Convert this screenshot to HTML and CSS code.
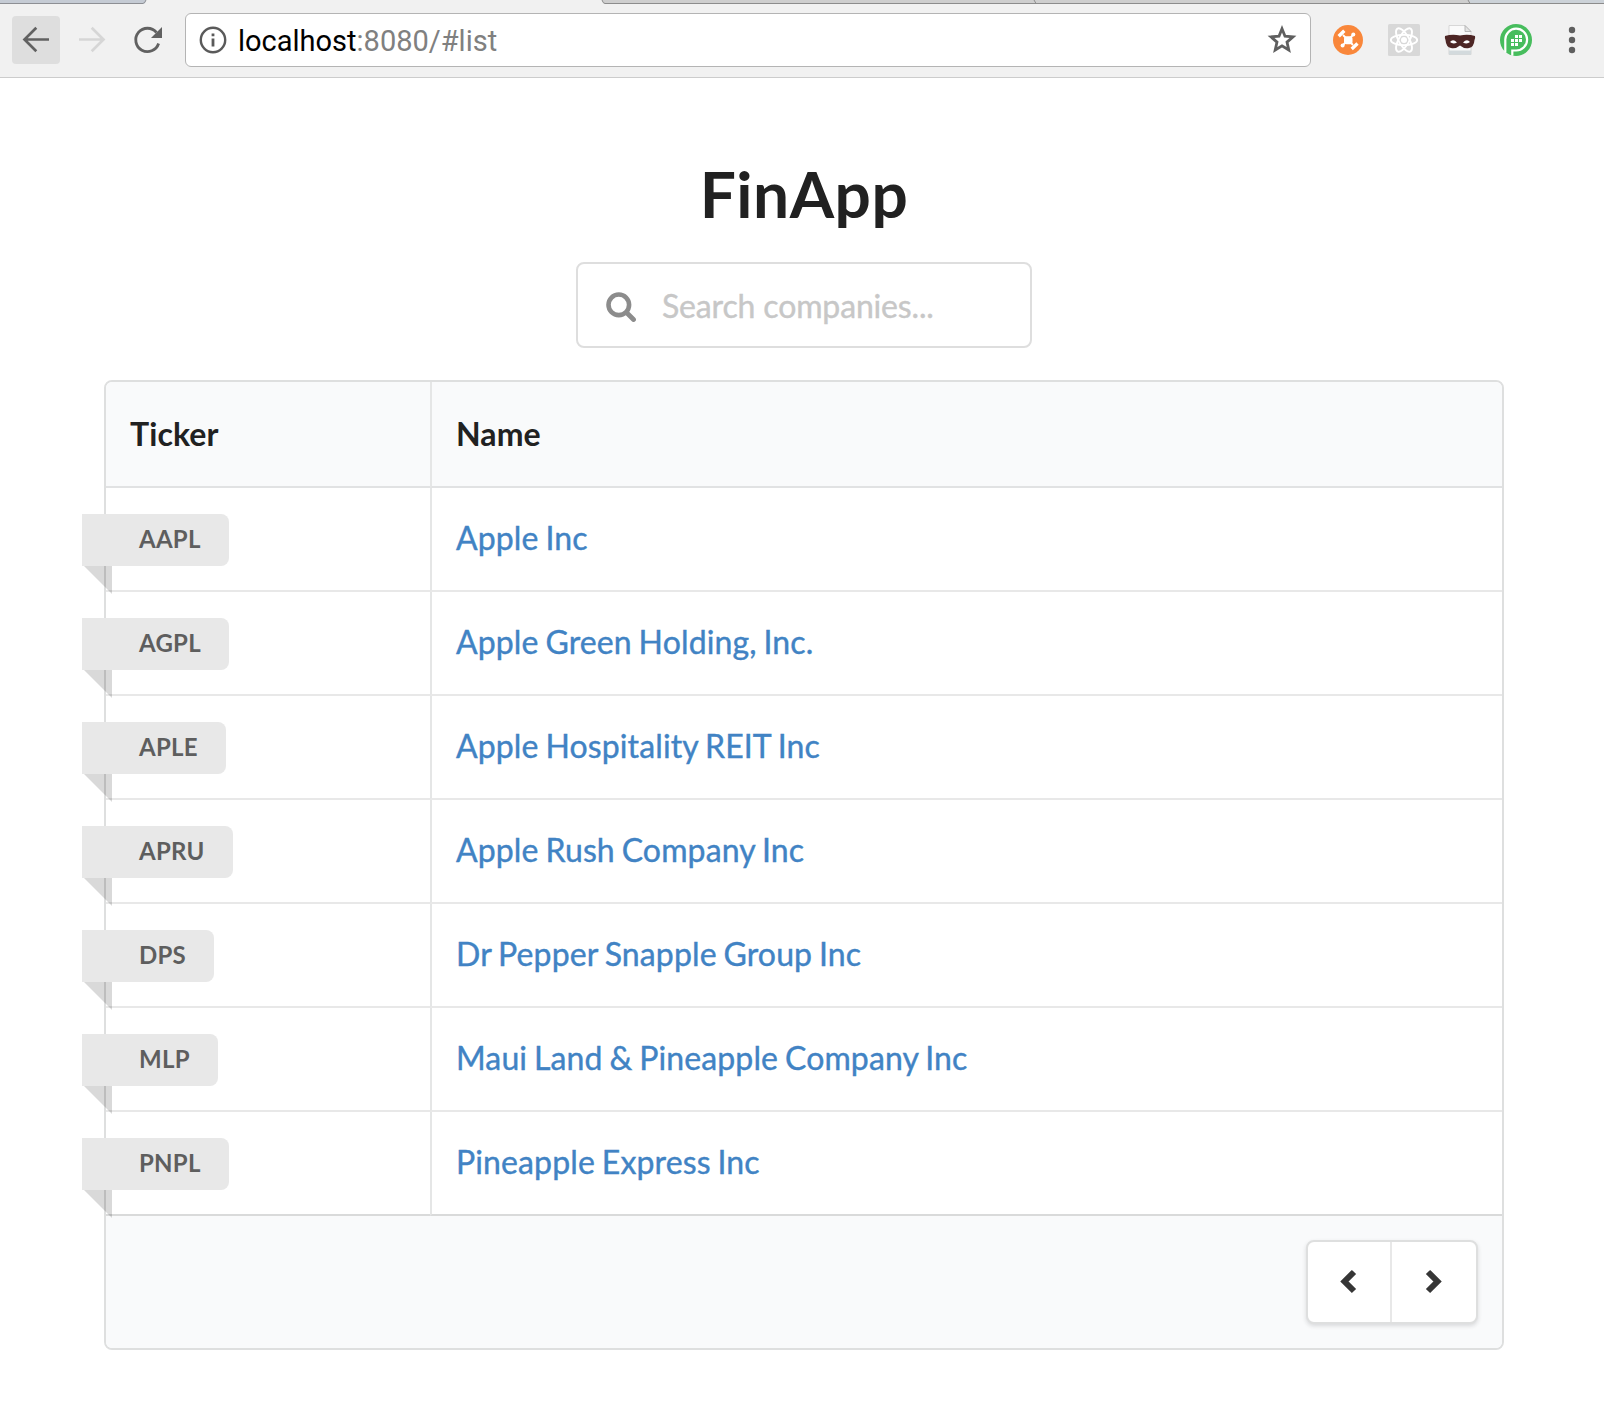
FILE: index.html
```html
<!DOCTYPE html>
<html lang="en">
<head>
<meta charset="utf-8">
<title>FinApp</title>
<link rel="stylesheet" href="styles.css">
</head>
<body>
<header class="browser">
  <svg class="tabs" viewBox="0 0 1604 4" width="1604" height="4" aria-hidden="true">
    <path d="M0 0H146L145 3.5H0Z" fill="#c5cbd4"/>
    <path d="M0 3.5H143Q145 3 146 0" fill="none" stroke="#8d8f94"/>
    <path d="M602 0H1604V4H604Z" fill="#cecece"/>
    <path d="M1469 0H1604V4H1471Z" fill="#ccd2d8"/>
    <path d="M602 0Q603 3.5 605 3.5H1604M1034 0L1036 3.5M1468 0L1470 3.5" fill="none" stroke="#8c8c8c"/>
  </svg>
  <div class="toolbar">
    <button class="nav nav-back" aria-label="Back">
      <svg viewBox="0 0 48 48"><path d="M37 23.5H13M24.3 11.7L12.5 23.5L24.3 35.3" fill="none" stroke="#616161" stroke-width="2.7"/></svg>
    </button>
    <button class="nav nav-forward" aria-label="Forward">
      <svg viewBox="0 0 48 48"><path d="M11 23.5H35M23.7 11.7L35.5 23.5L23.7 35.3" fill="none" stroke="#d6d6d6" stroke-width="2.7"/></svg>
    </button>
    <button class="nav nav-reload" aria-label="Reload">
      <svg viewBox="0 0 48 48"><path d="M34.6 27.5A11.7 11.7 0 1 1 32.5 16.5" fill="none" stroke="#616161" stroke-width="2.8"/><path d="M38 11V22H27Z" fill="#616161"/></svg>
    </button>
    <div class="omnibox">
      <svg class="info" viewBox="0 0 28 28"><circle cx="14" cy="14" r="12.2" fill="none" stroke="#5a5a5a" stroke-width="2.4"/><path d="M12.6 7.5h2.8v2.8h-2.8zM12.6 12.4h2.8v8h-2.8z" fill="#5a5a5a"/></svg>
      <div class="url">localhost<span>:8080/#list</span></div>
      <svg class="star" viewBox="0 0 30 30"><path d="M15 3.8L18 11.2L26 11.9L20 17.1L21.8 25L15 20.8L8.2 25L10 17.1L4 11.9L12 11.2Z" fill="none" stroke="#5f5f5f" stroke-width="2.8"/></svg>
    </div>
    <div class="extensions">
      <svg viewBox="0 0 32 32"><circle cx="16" cy="16" r="15" fill="#f9873b"/><path d="M11 11L21 21M21 11L11 21" stroke="#fff" stroke-width="1.8"/><rect x="12" y="12.3" width="8.5" height="8" rx="2.5" fill="#fff"/><circle cx="21.3" cy="10.4" r="2" fill="#fff"/><circle cx="10.6" cy="21.6" r="2" fill="#fff"/><path d="M6.7 12.2L12.3 6.8M19.7 25L25.5 19.6" stroke="#fff" stroke-width="3.4"/></svg>
      <svg viewBox="0 0 32 32"><rect width="32" height="32" rx="1.5" fill="#d8d8d8"/><g fill="none" stroke="#fff" stroke-width="1.9"><ellipse cx="16" cy="16" rx="13.2" ry="5.2"/><ellipse cx="16" cy="16" rx="13.2" ry="5.2" transform="rotate(60 16 16)"/><ellipse cx="16" cy="16" rx="13.2" ry="5.2" transform="rotate(120 16 16)"/></g><circle cx="16" cy="16" r="3" fill="#fff"/></svg>
      <svg viewBox="0 0 32 32"><path d="M5 1.500H21L27 7.500V30.500H5Z" fill="#fafafa" stroke="#cfcfcf" stroke-width=".8"/><path d="M21 1.500V7.500H27Z" fill="#e4e4e4" stroke="#aaa" stroke-width=".8"/><path d="M5 26.500H27V30.500H5Z" fill="#d3dadd"/><path d="M1 12Q8 10 16 11.500Q24 10 31 12Q31.500 14 30.500 16Q30 23 25 24Q20 25 16 21.500Q12 25 7 24Q2 23 1.500 16Q.5 14 1 12Z" fill="#4d2625"/><path d="M6 18Q9 14.500 13 18.500Q9 20.500 6 18ZM26 18Q23 14.500 19 18.500Q23 20.500 26 18Z" fill="#fff"/></svg>
      <svg viewBox="0 0 32 32"><circle cx="16" cy="16" r="16" fill="#47bd5d"/><path d="M5.300 28.500V16A10.900 10.900 0 1 1 16.200 26.500H12.300V31.700" fill="none" stroke="#fff" stroke-width="2.200"/><g fill="#fff"><path d="M15 11h3v3h-3zM19 11h3v3h-3zM11 15h3v3h-3zM15 15h3v3h-3zM19 15h3v3h-3zM11 19h3v3h-3zM15 19h3v3h-3z"/></g></svg>
    </div>
    <svg class="menu" viewBox="0 0 8 28"><g fill="#5f5f5f"><circle cx="4" cy="4" r="3.200"/><circle cx="4" cy="14" r="3.200"/><circle cx="4" cy="24" r="3.200"/></g></svg>
  </div>
</header>

<main class="page">
  <h1 class="title">FinApp</h1>
  <div class="search">
    <svg viewBox="0 0 30 30"><circle cx="12.800" cy="12.800" r="10.300" fill="none" stroke="#8c8c8c" stroke-width="4.600"/><path d="M20.500 20.500L27.500 27.500" stroke="#8c8c8c" stroke-width="4.800" stroke-linecap="round"/></svg>
    <input type="text" placeholder="Search companies..." aria-label="Search companies">
  </div>

  <div class="table">
    <div class="row head"><div class="cell">Ticker</div><div class="cell">Name</div></div>
    <div class="row"><div class="cell"><span class="ribbon">AAPL</span></div><div class="cell"><a>Apple Inc</a></div></div>
    <div class="row"><div class="cell"><span class="ribbon">AGPL</span></div><div class="cell"><a>Apple Green Holding, Inc.</a></div></div>
    <div class="row"><div class="cell"><span class="ribbon">APLE</span></div><div class="cell"><a>Apple Hospitality REIT Inc</a></div></div>
    <div class="row"><div class="cell"><span class="ribbon">APRU</span></div><div class="cell"><a>Apple Rush Company Inc</a></div></div>
    <div class="row"><div class="cell"><span class="ribbon">DPS</span></div><div class="cell"><a>Dr Pepper Snapple Group Inc</a></div></div>
    <div class="row"><div class="cell"><span class="ribbon">MLP</span></div><div class="cell"><a>Maui Land &amp; Pineapple Company Inc</a></div></div>
    <div class="row last"><div class="cell"><span class="ribbon">PNPL</span></div><div class="cell"><a>Pineapple Express Inc</a></div></div>
    <div class="foot">
      <div class="pager">
        <button aria-label="Previous page"><svg viewBox="0 0 18 26"><path d="M14 3L4.500 12.500L14 22"/></svg></button>
        <button aria-label="Next page"><svg viewBox="0 0 18 26"><path d="M3 3L12.500 12.500L3 22"/></svg></button>
      </div>
    </div>
  </div>
</main>
</body>
</html>
```
FILE: styles.css
```css
* { box-sizing: border-box; }

body {
  margin: 0;
  background: #fff;
  color: #212121;
  font-family: Lato, "Liberation Sans", sans-serif;
  font-size: 32px;
}

button {
  border: 0;
  padding: 0;
  background: none;
}

svg { display: block; flex: none; }

/* Browser toolbar */
.browser {
  height: 78px;
  background: #f1f1f1;
  border-bottom: 1px solid #ccc;
}

.tabs { height: 4px; }

.toolbar {
  display: flex;
  align-items: center;
  height: 73px;
  padding: 0 28px 1px 12px;
}

.nav {
  width: 48px;
  height: 48px;
  border-radius: 4px;
}

.nav-back { background: #dedede; }
.nav-forward { margin-left: 8px; }
.nav-reload { margin-left: 8px; }

.omnibox {
  display: flex;
  align-items: center;
  width: 1126px;
  height: 54px;
  margin-left: 13px;
  padding: 0 13px;
  background: #fff;
  border: 1px solid #b4b4b4;
  border-radius: 6px;
}

.info { width: 28px; height: 28px; }
.star { width: 30px; height: 30px; margin-left: auto; }

.url {
  margin-left: 11px;
  padding-top: 2px;
  color: #000;
  font: 29px Roboto, "Liberation Sans", sans-serif;
  white-space: nowrap;
}

.url span { color: #808080; }

.extensions {
  display: flex;
  gap: 24px;
  margin-left: 21px;
}

.extensions svg { width: 32px; height: 32px; }
.menu { width: 8px; height: 28px; margin-left: auto; }

/* Page */
.page {
  display: flex;
  flex-direction: column;
  align-items: center;
  width: 1400px;
  margin-left: 104px;
  padding-top: 75px;
}

.title {
  margin: 0;
  font-size: 64px;
  font-weight: 700;
  line-height: 82px;
  letter-spacing: .5px;
}

.search {
  display: flex;
  align-items: center;
  width: 456px;
  height: 86px;
  margin-top: 27px;
  padding: 0 28px;
  border: 2px solid #dedede;
  border-radius: 8px;
}

.search svg { width: 30px; height: 30px; margin-top: 4px; }

.search input {
  width: 330px;
  margin-left: 26px;
  padding: 0;
  border: 0;
  outline: 0;
  background: none;
  font: inherit;
  letter-spacing: -.15px;
}

.search input::placeholder {
  color: #c7c7c7;
  opacity: 1;
  -webkit-text-stroke: .4px #c7c7c7;
}

.table {
  width: 1400px;
  height: 970px;
  margin-top: 32px;
  border: 2px solid #dedfdf;
  border-radius: 8px;
}

.row {
  display: grid;
  grid-template-columns: 324px 1fr;
  height: 104px;
}

.cell {
  display: flex;
  align-items: center;
  padding-left: 24px;
  border-bottom: 2px solid #e8e8e8;
}

.cell + .cell { border-left: 2px solid #e5e6e6; }
.last .cell { border-bottom-color: #d9dada; }

.head {
  height: 106px;
  background: #f9fafb;
  border-radius: 6px 6px 0 0;
  font-weight: 700;
  letter-spacing: .1px;
}

.head .cell { padding-bottom: 2px; border-bottom-color: #e1e2e3; }

.cell a {
  padding-bottom: 4px;
  color: #4183c4;
  letter-spacing: .13px;
  word-spacing: -1.5px;
  -webkit-text-stroke: .4px #4183c4;
}

.ribbon {
  position: relative;
  height: 52px;
  margin: 2px 0 0 -48px;
  padding: 0 28px 0 57px;
  background: #e8e8e8;
  border-radius: 0 8px 8px 0;
  color: #5e5e5e;
  font-size: 24px;
  font-weight: 700;
  line-height: 50px;
  letter-spacing: .25px;
}

.ribbon::after {
  content: "";
  position: absolute;
  top: 100%;
  left: 0;
  width: 30px;
  height: 28px;
  background: rgba(0, 0, 0, .15);
  clip-path: polygon(2px 0, 100% 0, 100% 100%);
}

.foot {
  display: flex;
  justify-content: flex-end;
  height: 132px;
  padding: 24px;
  background: #f9fafb;
  border-radius: 0 0 6px 6px;
}

.pager {
  display: flex;
  width: 172px;
  height: 84px;
  background: #fff;
  border: 2px solid #dedfdf;
  border-radius: 8px;
  box-shadow: 0 2px 4px rgba(34, 36, 38, .15);
}

.pager button {
  display: flex;
  align-items: center;
  justify-content: center;
  width: 84px;
}

.pager button:first-child { border-right: 2px solid #e8e8e8; }
.pager svg { width: 18px; height: 26px; overflow: visible; }
.pager path { fill: none; stroke: #363636; stroke-width: 6; }
```
